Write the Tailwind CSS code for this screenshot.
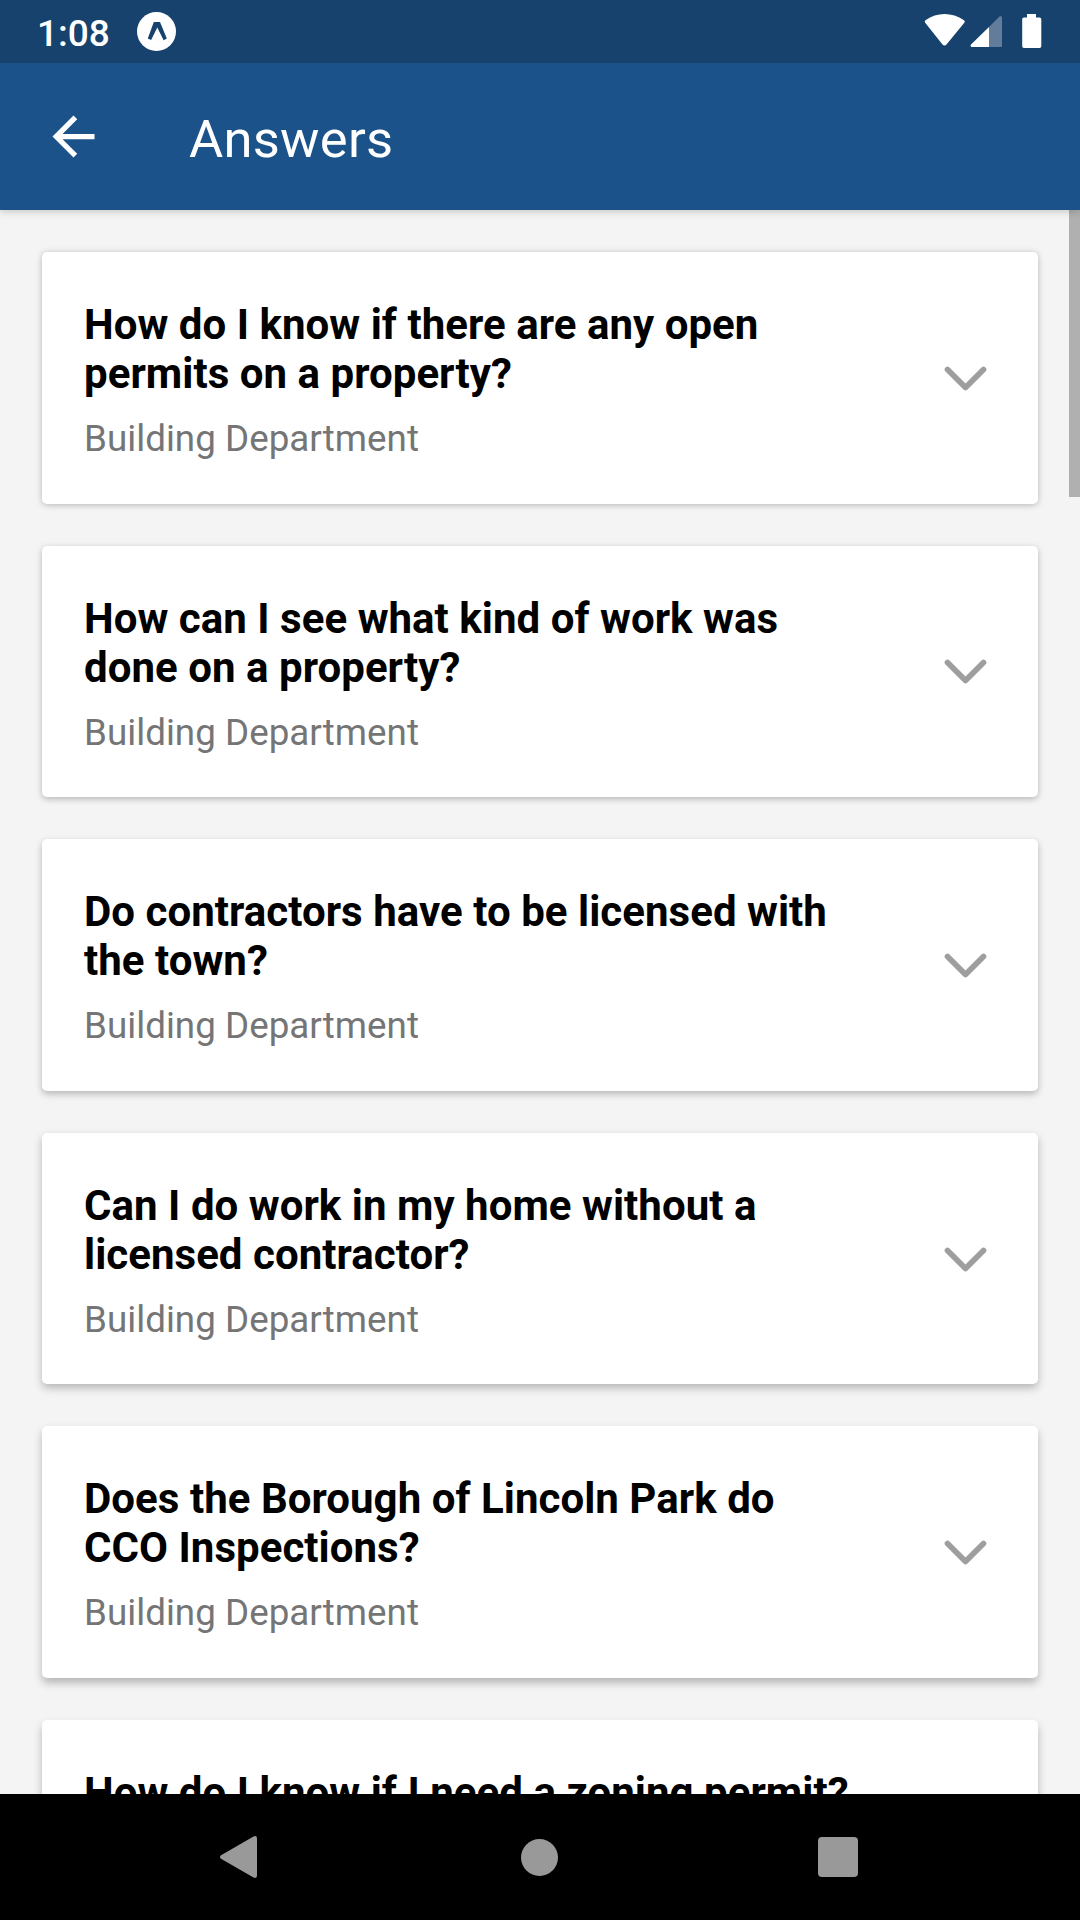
<!DOCTYPE html>
<html lang="en">
<head>
<meta charset="utf-8">
<title>Answers</title>
<script src="https://cdn.jsdelivr.net/npm/@tailwindcss/browser@4"></script>
</head>
<body class="relative flex h-[1920px] w-[1080px] flex-col overflow-hidden bg-[#f4f4f4] font-['Roboto',sans-serif]">
  <!-- Status bar -->
  <div class="relative z-20 flex h-[63px] shrink-0 items-center bg-[#17426d] pl-[37px] text-white">
    <span class="w-[100px] pt-[3px] text-[37px] leading-[43px] font-medium">1:08</span>
    <svg class="h-[39px] w-[39px]" viewBox="0 0 39 39"><circle cx="19.5" cy="19.5" r="19.5" fill="#fff"/><path d="M16.800 10h6.200l6.800 16.500-3.200 1.700-6.300-12.700-6.200 12.500-3.300-1.500z" fill="#17426d"/></svg>
    <svg class="ml-auto h-[63px] w-[160px]" viewBox="920 0 160 63">
      <path d="M925.2 22.8a1.8 1.8 0 0 1 .3-2.6C937 12 952 12 964 20.200a1.800 1.800 0 0 1 .3 2.600L946.500 44.500a2.500 2.500 0 0 1-4 0z" fill="#fff"/>
      <path d="M989 27l10.500-10.500a1.500 1.500 0 0 1 2.500 1V45.500a1.500 1.500 0 0 1-1.500 1.500H989z" fill="#627d9b"/>
      <path d="M989 27v20H972a1.500 1.500 0 0 1-1-2.600z" fill="#fff"/>
      <path d="M1027 14h9v3.500h3.500a1.800 1.800 0 0 1 1.800 1.800V46.200a1.800 1.800 0 0 1-1.800 1.800H1024a1.800 1.800 0 0 1-1.800-1.800V19.300a1.800 1.800 0 0 1 1.800-1.800h3z" fill="#fff"/>
    </svg>
  </div>
  <!-- App bar -->
  <header class="relative z-10 flex h-[147px] shrink-0 items-center bg-[#1b5289] pl-[42px] text-white shadow-[0_1px_8px_rgba(0,0,0,0.22)]">
    <svg class="h-[63px] w-[63px]" viewBox="0 0 24 24"><path d="M20 11H7.830l5.590-5.590L12 4l-8 8 8 8 1.410-1.410L7.830 13H20v-2z" fill="#fff"/></svg>
    <h1 class="ml-[84px] pt-[4px] text-[52.5px] leading-[62px] tracking-[0.25px]">Answers</h1>
  </header>
  <!-- Questions -->
  <main class="flex min-h-0 flex-1 flex-col gap-[42px] overflow-hidden px-[42px] pt-[42px]" id="list"></main>
  <!-- Scroll indicator -->
  <div class="absolute top-[210px] right-0 h-[287px] w-[11px] bg-[#b0b0b0]"></div>
  <!-- Navigation bar -->
  <nav class="flex h-[126px] shrink-0 items-center justify-center bg-black pr-[2px]">
    <div class="flex w-[299px] justify-center"><svg class="mr-[3px] h-[42px] w-[37px]" viewBox="0 0 37 42"><path d="M1 19.200L33.500.5Q37-1 37 2.500V39.500Q37 43 33.500 41.500L1 22.800Q-1 21 1 19.200z" fill="#999"/></svg></div>
    <div class="flex w-[299px] justify-center"><div class="h-[37px] w-[37px] rounded-full bg-[#999]"></div></div>
    <div class="flex w-[299px] justify-center"><div class="h-[40px] w-[40px] rounded-[4px] bg-[#999]"></div></div>
  </nav>
<script>
const questions = [
  ['How do I know if there are any open', 'permits on a property?'],
  ['How can I see what kind of work was', 'done on a property?'],
  ['Do contractors have to be licensed with', 'the town?'],
  ['Can I do work in my home without a', 'licensed contractor?'],
  ['Does the Borough of Lincoln Park do', 'CCO Inspections?'],
  ['How do I know if I need a zoning permit?']
];
// Shadows deepen slightly toward the bottom of the screen.
const shadows = [
  'shadow-[0_1px_6px_rgba(0,0,0,0.26)]',
  'shadow-[0_2px_6px_rgba(0,0,0,0.26)]',
  'shadow-[0_3px_7px_rgba(0,0,0,0.26)]',
  'shadow-[0_4px_8px_rgba(0,0,0,0.26)]',
  'shadow-[0_5px_9px_rgba(0,0,0,0.26)]',
  'shadow-[0_5px_9px_rgba(0,0,0,0.26)]'
];
document.getElementById('list').innerHTML = questions.map((q, i) => `
  <article class="flex h-[251.6px] shrink-0 justify-between rounded-[5px] bg-white pr-[51px] pl-[42px] ${shadows[i]}">
    <div class="pt-[48px] whitespace-nowrap">
      <h2 class="text-[42px] leading-[49px] font-bold tracking-[0.04px] text-black">${q.join('<br>')}</h2>
      ${q[1] ? '<p class="pt-[19px] text-[36.75px] leading-[43px] tracking-[0.03px] text-[#757575]">Building Department</p>' : ''}
    </div>
    <svg class="h-[26px] w-[44px] self-center" viewBox="0 0 44 26"><path d="M4.500 4.500L22.500 22.500L40.500 4.500" fill="none" stroke="#9e9e9e" stroke-width="5.700" stroke-linecap="round" stroke-linejoin="round"/></svg>
  </article>`).join('');
</script>
</body>
</html>
